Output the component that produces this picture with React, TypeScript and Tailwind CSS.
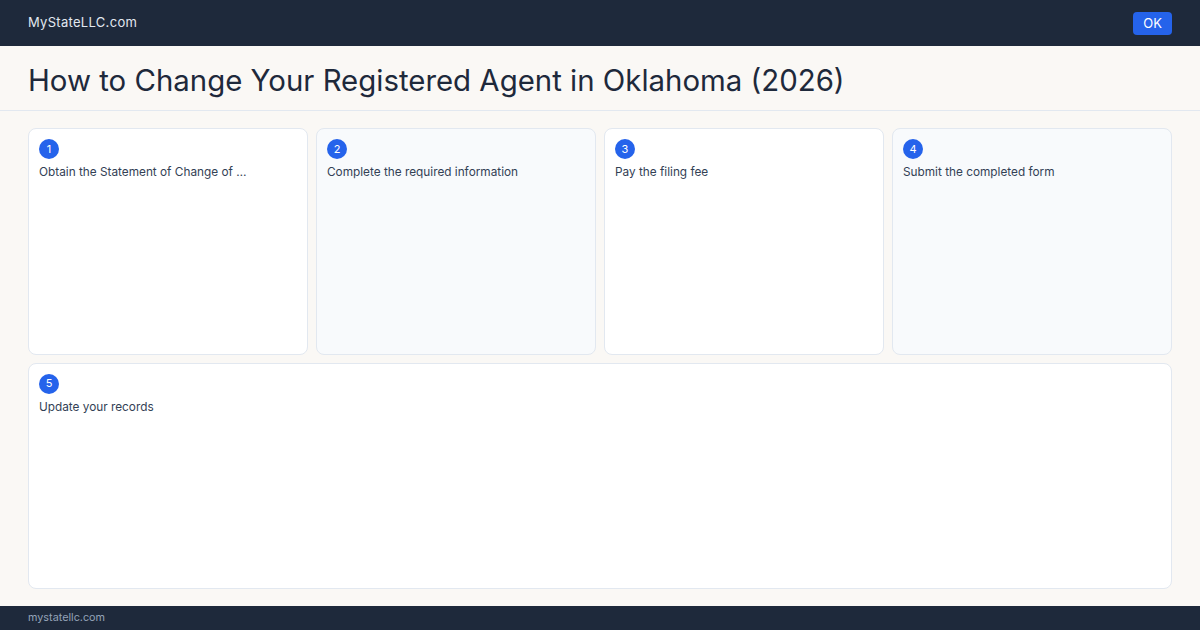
export default function App() {
  const steps = [
    { n: 1, text: "Obtain the Statement of Change of …", tint: false },
    { n: 2, text: "Complete the required information", tint: true },
    { n: 3, text: "Pay the filing fee", tint: false },
    { n: 4, text: "Submit the completed form", tint: true },
  ];

  return (
    <div
      className="w-[1200px] h-[630px] flex flex-col bg-[#faf8f5] overflow-hidden"
      style={{ fontFamily: "Inter, 'Noto Sans', sans-serif" }}
    >
      <header className="h-[46px] shrink-0 bg-[#1e293b] flex items-center justify-between px-[28px]">
        <span className="text-[13px] text-[#e2e8f0] tracking-[0.3px]">MyStateLLC.com</span>
        <button className="h-[23px] px-[10px] rounded-[4px] bg-[#2563eb] text-white text-[13px] leading-none">
          OK
        </button>
      </header>

      <div className="h-[65px] shrink-0 border-b border-[#e2e8f0] flex items-center px-[28px] pt-[5px]">
        <h1 className="text-[29.4px] text-[#1e293b] leading-none">
          How to Change Your Registered Agent in Oklahoma (2026)
        </h1>
      </div>

      <main className="flex-1 px-[28px] py-[17px] grid grid-cols-4 grid-rows-2 gap-[8px]">
        {steps.map((s) => (
          <StepCard key={s.n} n={s.n} text={s.text} tint={s.tint} />
        ))}
        <div className="col-span-4">
          <StepCard n={5} text="Update your records" tint={false} />
        </div>
      </main>

      <footer className="h-[24px] shrink-0 bg-[#1e293b] flex items-center px-[28px]">
        <span className="text-[10.8px] text-[#94a3b8]">mystatellc.com</span>
      </footer>
    </div>
  );
}

function StepCard({ n, text, tint }: { n: number; text: string; tint: boolean }) {
  return (
    <div
      className={`h-full border border-[#e2e8f0] rounded-[8px] p-[10px] flex flex-col gap-[5px] ${
        tint ? "bg-[#f8fafc]" : "bg-white"
      }`}
    >
      <div className="w-[20px] h-[20px] rounded-full bg-[#2563eb] text-white text-[11px] flex items-center justify-center leading-none">
        {n}
      </div>
      <p className="text-[11.8px] text-[#334155] leading-[16px]">{text}</p>
    </div>
  );
}
